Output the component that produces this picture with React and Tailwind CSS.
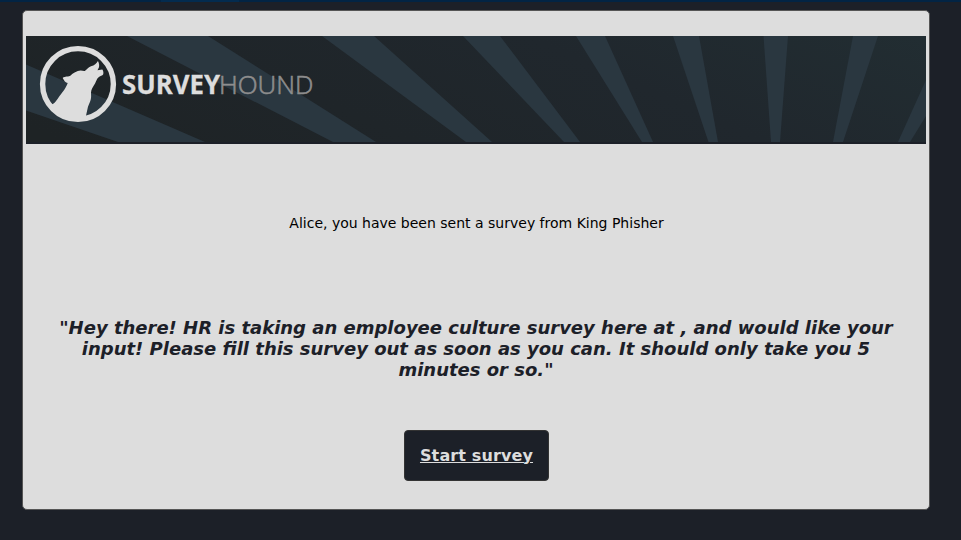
function Banner() {
  return (
    <svg viewBox="26 36 900 108" className="block h-[108px] w-[900px]" role="img" aria-label="SurveyHound">
      <defs>
        <linearGradient id="base" gradientUnits="userSpaceOnUse" x1="330" y1="260" x2="560" y2="-260">
          <stop offset="0" stopColor="#1e2325" />
          <stop offset="0.5" stopColor="#20272d" />
          <stop offset="1" stopColor="#233236" />
        </linearGradient>
      </defs>
      <rect x="26" y="36" width="900" height="108" fill="url(#base)" />
      <g fill="#2a3740">
        <polygon points="26,64.5 205,142 118,142 26,110.5" />
        <polygon points="127,36 208,36 376,142 333,142" />
        <polygon points="322,36 374,36 492,142 466,142" />
        <polygon points="463,36 500,36 580,142 564,142" />
        <polygon points="576,36 605,36 653,142 642,142" />
        <polygon points="673,36 699,36 718,142 708.5,142" />
        <polygon points="763.5,36 788,36 780,142 771,142" />
        <polygon points="853,36 878,36 843,142 833,142" />
        <polygon points="926,80 926,116 910,142 898,142" />
      </g>
      <rect x="26" y="142" width="900" height="2" fill="#1c2028" />
      <circle cx="78" cy="84" r="35.4" fill="none" stroke="#dddddd" strokeWidth="5.4" />
      <path
        d="M51.500 104.500 C54 104 55.500 102 58.700 97.300 C61.500 93 65.500 89.500 67.700 83 C65.500 83 64 80.500 62.700 78 C63.500 76.300 67 77 70.300 75.700 C73 73 77 71 80.500 70.600 C82 70.500 83.500 71.300 84.800 71 C87 69.300 88 67.500 91 66.300 C94.500 65.200 96.500 63.800 97.900 61 C99 63 99.600 65.500 98.900 67.500 L97.500 70.300 L102.300 69.400 C103.300 70.500 103.700 72.500 103.200 74.300 C102 76.200 98.500 76.300 97 79.200 C95.300 82.500 95 84 93.500 86 C91.500 89 90.700 91.500 91.100 95 C91.500 101 88.500 104 87.700 108 C87 111.500 86.500 113 86 116 L84 120 L70 120 L54 111 Z"
        fill="#dddddd"
      />
      <text x="122" y="93.500" fontSize="26" fontWeight="700" fill="#dddddd" stroke="#dddddd" strokeWidth="0.3" textLength="98" lengthAdjust="spacingAndGlyphs" className="font-['Open_Sans',sans-serif]">SURVEY</text>
      <text x="219" y="93.500" fontSize="26" fontWeight="300" fill="#8d8d8d" stroke="#8d8d8d" strokeWidth="0.6" textLength="94.500" lengthAdjust="spacingAndGlyphs" className="font-['Open_Sans',sans-serif]">HOUND</text>
    </svg>
  );
}

export default function App() {
  return (
    <div className="h-[540px] w-[961px] overflow-hidden bg-[#1c2028] font-['DejaVu_Sans',sans-serif]">
      <div className="flex h-[2px] bg-[#022444]">
        <div className="ml-[161px] w-[78px] bg-[#032b4f]" />
      </div>
      <main className="mt-2 ml-[22px] flex h-[500px] w-[908px] flex-col items-center rounded-[5px] border border-[#555555] bg-[#dddddd] pt-[25px]">
        <Banner />
        <p className="mt-[69px] pl-px text-[14px] leading-5 whitespace-nowrap text-black">
          Alice, you have been sent a survey from King Phisher
        </p>
        <p className="mt-[84px] text-center text-[18px] leading-[21px] font-bold whitespace-nowrap text-[#1c2028] italic">
          "Hey there! HR is taking an employee culture survey here at , and would like your
          <br />
          input! Please fill this survey out as soon as you can. It should only take you 5
          <br />
          minutes or so."
        </p>
        <a
          href="#survey"
          className="mt-[50px] flex h-[51px] w-[145px] items-center justify-center rounded-[4px] border border-[#333333] bg-[#1c2028] pl-px text-[16px] font-bold tracking-[0.12px] whitespace-nowrap text-[#dddddd] underline"
        >
          Start survey
        </a>
      </main>
    </div>
  );
}
